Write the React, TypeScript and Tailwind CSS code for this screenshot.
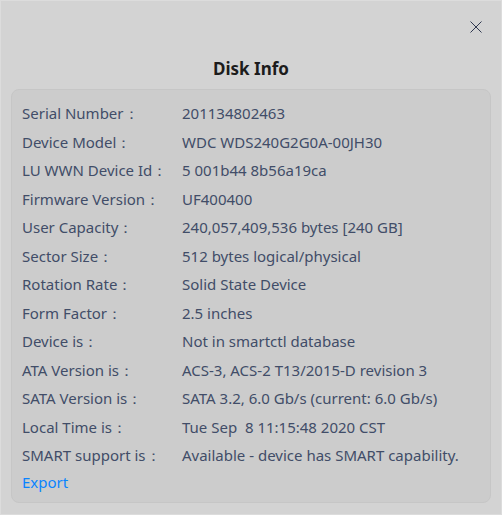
import React from 'react';

const rows: [string, string][] = [
  ['Serial Number', '201134802463'],
  ['Device Model', 'WDC WDS240G2G0A-00JH30'],
  ['LU WWN Device Id', '5 001b44 8b56a19ca'],
  ['Firmware Version', 'UF400400'],
  ['User Capacity', '240,057,409,536 bytes [240 GB]'],
  ['Sector Size', '512 bytes logical/physical'],
  ['Rotation Rate', 'Solid State Device'],
  ['Form Factor', '2.5 inches'],
  ['Device is', 'Not in smartctl database'],
  ['ATA Version is', 'ACS-3, ACS-2 T13/2015-D revision 3'],
  ['SATA Version is', 'SATA 3.2, 6.0 Gb/s (current: 6.0 Gb/s)'],
  ['Local Time is', 'Tue Sep\u00a0 8 11:15:48 2020 CST'],
  ['SMART support is', 'Available - device has SMART capability.'],
];

export default function App() {
  return (
    <div
      className="w-[502px] h-[515px] bg-[#d3d3d3] border border-[#dcdcdc] flex flex-col"
      style={{ fontFamily: '"Noto Sans", sans-serif' }}
    >
      {/* header */}
      <div className="h-[50px] flex justify-end items-start">
        <button className="mt-[15px] mr-[14px] w-[22px] h-[22px] flex items-center justify-center">
          <svg width="12" height="12" viewBox="0 0 12 12">
            <path d="M0.5 0.5 L11.5 11.5 M11.5 0.5 L0.5 11.5" stroke="#2f3850" strokeWidth="1" fill="none" />
          </svg>
        </button>
      </div>
      <div className="h-[38px] flex items-start justify-center">
        <h1 className="text-[17px] font-bold text-[#1c1c1c] leading-[36px]">Disk Info</h1>
      </div>

      {/* info panel */}
      <div className="mx-[10px] bg-[#cccccc] border border-[#c6c6c6] rounded-[8px] pt-[9px] pb-[7px] px-[10px]">
        {rows.map(([label, value]) => (
          <div key={label} className="flex h-[28.5px] items-center text-[15px] text-[#414d68]">
            <div className="w-[160px] whitespace-pre">{label}{'：'}</div>
            <div className="whitespace-pre">{value}</div>
          </div>
        ))}
        <div className="h-[24px] flex items-center text-[15px] text-[#0a84ff] mt-[1px]">Export</div>
      </div>
    </div>
  );
}
